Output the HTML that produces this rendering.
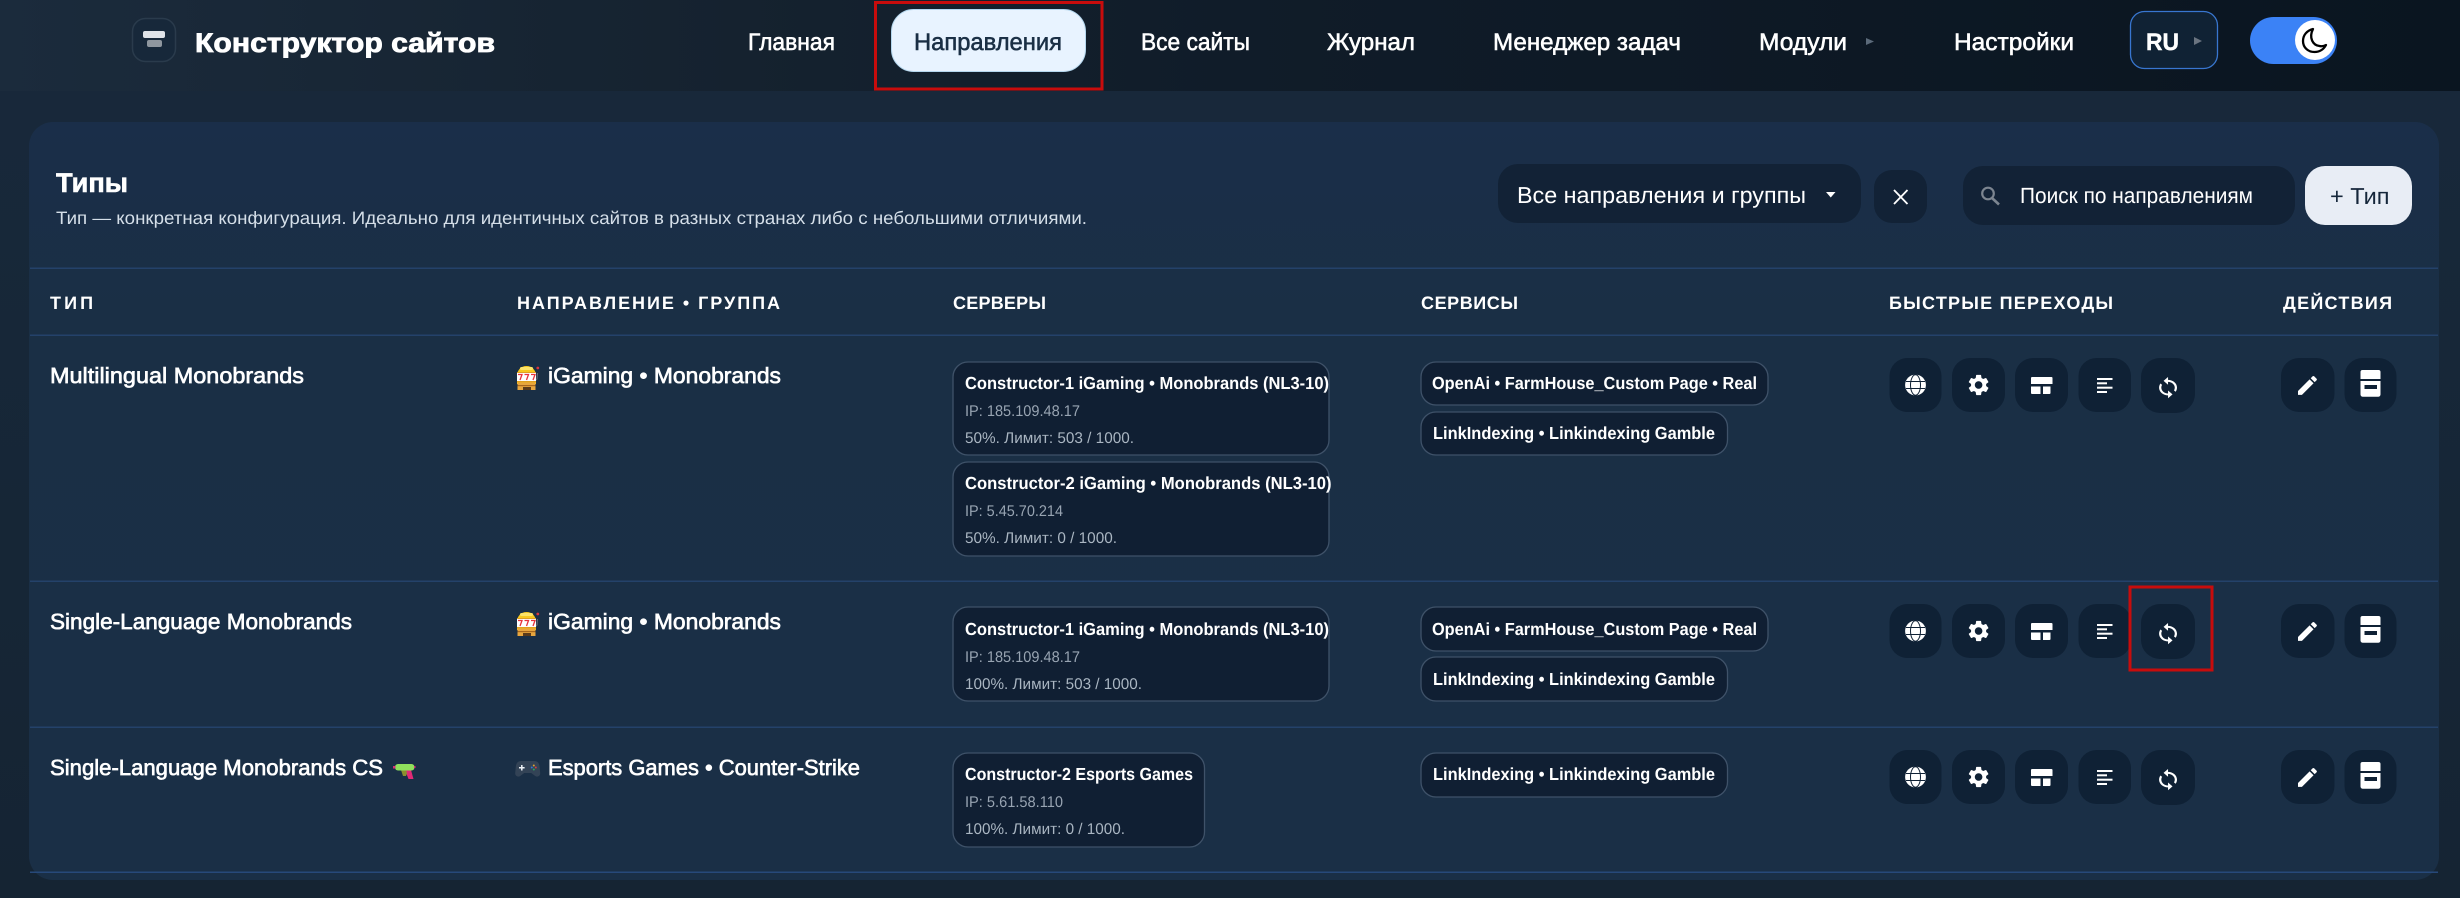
<!DOCTYPE html>
<html lang="ru"><head><meta charset="utf-8"><title>Конструктор сайтов</title>
<style>
html,body{margin:0;padding:0;background:#16273a;width:2460px;height:898px;overflow:hidden}
svg{display:block}
text{font-family:"Liberation Sans",sans-serif;fill:#fff;text-rendering:geometricPrecision}
.nav{font-size:24px;stroke:#fff;stroke-width:.55px}
.th{font-size:18px;font-weight:700}
.nm{font-size:22px;stroke:#fff;stroke-width:.65px}
.st{font-size:17.5px;font-weight:700}
.ip{font-size:15.5px;fill:#98a4b2}
.lm{font-size:15.5px;fill:#aab6c2}
.box{fill:#101f33;stroke:#3f5269;stroke-width:1.3}
.ib{fill:#0f2135}
.ln{fill:#24426a}
</style></head><body>
<svg width="2460" height="898" viewBox="0 0 2460 898" xmlns="http://www.w3.org/2000/svg">
<defs>
<linearGradient id="hd" x1="0" x2="1" y1="0" y2="0"><stop offset="0" stop-color="#1b2b3c"/><stop offset=".3" stop-color="#15222f"/><stop offset=".5" stop-color="#101c29"/><stop offset="1" stop-color="#0a1520"/></linearGradient>
<linearGradient id="bg" x1="0" x2="0" y1="0" y2="1"><stop offset="0" stop-color="#18293b"/><stop offset="1" stop-color="#152433"/></linearGradient>
<linearGradient id="cd" x1="0" x2="0" y1="0" y2="1"><stop offset="0" stop-color="#1a2e49"/><stop offset=".25" stop-color="#1a2f45"/><stop offset="1" stop-color="#1a2f46"/></linearGradient>

<g id="btns">
<rect class="ib" x="1889.5" y="358" width="52" height="54" rx="18"/>
<rect class="ib" x="1952" y="358" width="53" height="54" rx="18"/>
<rect class="ib" x="2015" y="358" width="53" height="54" rx="18"/>
<rect class="ib" x="2078.5" y="358" width="52.5" height="54" rx="18"/>
<rect class="ib" x="2141" y="358" width="54" height="55" rx="19"/>
<rect class="ib" x="2281" y="358" width="53.5" height="54" rx="18"/>
<rect class="ib" x="2344.5" y="358" width="52" height="54" rx="18"/>
<!-- globe -->
<circle cx="1915.5" cy="385" r="10.4" fill="#fff"/>
<g fill="none" stroke="#0f2135" stroke-width="1"><ellipse cx="1915.5" cy="385" rx="5" ry="10.2"/><path d="M1906 381.500h19M1906 388.500h19"/></g>
<!-- gear -->
<path transform="translate(1966 372.4) scale(1.05)" fill="#fff" d="M19.14 12.94c.04-.3.06-.61.06-.94 0-.32-.02-.64-.07-.94l2.03-1.58c.18-.14.23-.41.12-.61l-1.92-3.32c-.12-.22-.37-.29-.59-.22l-2.39.96c-.5-.38-1.03-.7-1.62-.94l-.36-2.54c-.04-.24-.24-.41-.48-.41h-3.84c-.24 0-.43.17-.47.41l-.36 2.54c-.59.24-1.13.57-1.62.94l-2.39-.96c-.22-.08-.47 0-.59.22L2.74 8.87c-.12.21-.08.47.12.61l2.03 1.58c-.05.3-.09.63-.09.94s.02.64.07.94l-2.03 1.58c-.18.14-.23.41-.12.61l1.92 3.32c.12.22.37.29.59.22l2.39-.96c.5.38 1.03.7 1.62.94l.36 2.54c.05.24.24.41.48.41h3.84c.24 0 .44-.17.47-.41l.36-2.54c.59-.24 1.13-.56 1.62-.94l2.39.96c.22.08.47 0 .59-.22l1.92-3.32c.12-.22.07-.47-.12-.61l-2.01-1.58zM12 15.6c-1.98 0-3.6-1.62-3.6-3.6s1.62-3.6 3.6-3.6 3.6 1.62 3.6 3.6-1.62 3.6-3.6 3.6z"/>
<!-- dashboard -->
<path fill="#fff" d="M2032 377h19.5a1 1 0 0 1 1 1v6h-21.5v-6a1 1 0 0 1 1-1zM2031 386.500h9.500V394h-8.500a1 1 0 0 1-1-1zM2043 386.500h7.500V393a1 1 0 0 1-1 1h-6.500z"/>
<!-- list -->
<g fill="#fff"><rect x="2097" y="378" width="15.500" height="2"/><rect x="2097" y="382.300" width="10" height="2"/><rect x="2097" y="386.700" width="15.500" height="2"/><rect x="2097" y="391" width="10" height="2"/></g>
<!-- sync -->
<path transform="translate(2154.6 376) scale(1.12 .97)" fill="#fff" d="M12 4V1L8 5l4 4V6c3.31 0 6 2.69 6 6 0 1.01-.25 1.97-.7 2.8l1.46 1.46C19.54 15.03 20 13.57 20 12c0-4.42-3.58-8-8-8zm0 14c-3.31 0-6-2.69-6-6 0-1.01.25-1.97.7-2.8L5.24 7.74C4.46 8.97 4 10.43 4 12c0 4.42 3.58 8 8 8v3l4-4-4-4v3z"/>
<!-- pencil -->
<path transform="translate(2294.85 372.85) scale(1.05)" fill="#fff" d="M3 17.25V21h3.75L17.81 9.94l-3.75-3.75L3 17.25zM20.71 7.040c.39-.39.39-1.020 0-1.410l-2.340-2.340c-.39-.39-1.020-.39-1.410 0l-1.830 1.830 3.750 3.750 1.830-1.830z"/>
<!-- archive -->
<path fill="#fff" d="M2362.500 370h16a2 2 0 0 1 2 2v7h-20v-7a2 2 0 0 1 2-2zM2360.500 381h20v13.500a2.300 2.300 0 0 1-2.300 2.300h-15.400a2.300 2.300 0 0 1-2.300-2.300z"/>
<rect x="2364.500" y="385" width="12.500" height="4" fill="#0f2135"/>
</g>

<g id="slot">
<path d="M537.500 373l-.5 6-2 2" fill="none" stroke="#5d6670" stroke-width="1.200"/>
<circle cx="537.800" cy="368" r="1.400" fill="#d8353d"/>
<path d="M517 376c0-6 4-10 9.500-10s9.500 4 9.500 10v8h-19z" fill="#f7c81f"/>
<rect x="520" y="367" width="13" height="3" rx="1.500" fill="#fde468"/>
<rect x="517" y="373" width="19" height="8" fill="#fff"/>
<rect x="517" y="372" width="19" height="1" fill="#e0a020"/>
<rect x="517" y="381" width="19" height="1.300" fill="#e0a020"/>
<g fill="none" stroke="#e8343c" stroke-width="1.300"><path d="M518 374.500h4l-2 5.500M524.500 374.500h4l-2 5.500M531 374.500h4l-2 5.500"/></g>
<rect x="517.500" y="382.500" width="18" height="7.500" fill="#e8a63e"/>
<rect x="517.500" y="385" width="18" height="1.200" fill="#a8661c"/>
<rect x="523" y="387" width="8" height="3" fill="#5a3a1a"/>
</g>
</defs>

<rect width="2460" height="898" fill="url(#bg)"/>
<rect width="2460" height="91" fill="url(#hd)"/>
<rect x="29" y="122" width="2410" height="758" rx="24" fill="url(#cd)"/>

<!-- logo -->
<rect x="132.500" y="18.500" width="43" height="43" rx="13" fill="#17283a" stroke="#2a3b4c" stroke-width="1.5"/>
<rect x="143" y="31" width="22" height="7" rx="2" fill="#dfe3e8"/>
<rect x="147" y="40" width="15" height="7" rx="2" fill="#8f979f"/>
<text x="195" y="52" font-size="27" font-weight="700" textLength="300" lengthAdjust="spacingAndGlyphs" stroke="#fff" stroke-width=".8">Конструктор сайтов</text>

<!-- nav -->
<text class="nav" x="748" y="50" textLength="87" lengthAdjust="spacingAndGlyphs">Главная</text>
<rect x="891.500" y="9.500" width="194" height="62" rx="22" fill="#e8f3ff" stroke="#b5d7ee"/>
<text class="nav" x="914" y="50" textLength="148" lengthAdjust="spacingAndGlyphs" style="fill:#1a2f45;stroke:#1a2f45">Направления</text>
<rect x="875.500" y="2.500" width="226.500" height="86.500" fill="none" stroke="#c80c0c" stroke-width="3"/>
<text class="nav" x="1141" y="50" textLength="109" lengthAdjust="spacingAndGlyphs">Все сайты</text>
<text class="nav" x="1327" y="50" textLength="88" lengthAdjust="spacingAndGlyphs">Журнал</text>
<text class="nav" x="1493" y="50" textLength="188" lengthAdjust="spacingAndGlyphs">Менеджер задач</text>
<text class="nav" x="1759" y="50" textLength="88" lengthAdjust="spacingAndGlyphs">Модули</text>
<path d="M1866 38l8 3.500-8 3.500z" fill="#5b6a7a"/>
<text class="nav" x="1954" y="50" textLength="120" lengthAdjust="spacingAndGlyphs">Настройки</text>
<rect x="2130.500" y="11.500" width="87" height="57" rx="14" fill="#102234" stroke="#3876cf" stroke-width="1.300"/>
<text x="2146" y="50" font-size="24" font-weight="700" textLength="33" lengthAdjust="spacingAndGlyphs" stroke="#fff" stroke-width=".4">RU</text>
<path d="M2194 37l8 4-8 4z" fill="#6a7480"/>
<rect x="2250" y="17" width="87" height="47" rx="23.500" fill="#3b82f6"/>
<circle cx="2315" cy="40" r="20" fill="#fff"/>
<path d="M2313 29c-6 1.500-10 6-10 12 0 6.500 5 11 11.500 11 5 0 9-2.500 11.500-7-2 1-4.500 1.500-6.500 1-6.500-.7-11-8-6.500-17z" fill="none" stroke="#000" stroke-width="2.300" stroke-linejoin="round"/>

<!-- section head -->
<text x="56" y="192" font-size="27" font-weight="700" textLength="72" lengthAdjust="spacingAndGlyphs" stroke="#fff" stroke-width=".6">Типы</text>
<text x="56" y="224" font-size="18" textLength="1031" lengthAdjust="spacingAndGlyphs" style="fill:#d5dfe9">Тип — конкретная конфигурация. Идеально для идентичных сайтов в разных странах либо с небольшими отличиями.</text>

<rect x="1498" y="164" width="363" height="59" rx="20" fill="#122236"/>
<text x="1517" y="203" font-size="23" textLength="289" lengthAdjust="spacingAndGlyphs">Все направления и группы</text>
<path d="M1826 192h9.500l-4.750 5.500z" fill="#fff"/>
<rect x="1874" y="170" width="53" height="53" rx="18" fill="#122236"/>
<path d="M1894 190l13.500 14M1907.500 190l-13.500 14" stroke="#fff" stroke-width="1.800" fill="none"/>
<rect x="1963" y="166" width="332" height="59" rx="20" fill="#122236"/>
<circle cx="1988" cy="193.500" r="5.800" fill="none" stroke="#7c8590" stroke-width="2.200"/>
<path d="M1992 198l7 6.500" stroke="#7c8590" stroke-width="2.600" fill="none"/>
<text x="2020" y="203" font-size="22" textLength="233" lengthAdjust="spacingAndGlyphs">Поиск по направлениям</text>
<rect x="2305" y="166" width="107" height="59" rx="20" fill="#e8edf5"/>
<text x="2330" y="204" font-size="23" textLength="59.500" lengthAdjust="spacingAndGlyphs" style="fill:#15263a">+ Тип</text>

<!-- table lines -->
<rect class="ln" x="30" y="267.500" width="2408" height="1.500"/>
<rect class="ln" x="30" y="334.500" width="2408" height="1.500"/>
<rect class="ln" x="30" y="580.500" width="2408" height="1.500"/>
<rect class="ln" x="30" y="726.500" width="2408" height="1.500"/>
<rect x="30" y="871.500" width="2408" height="1.500" fill="#27497a"/>

<!-- table head -->
<text class="th" x="50" y="309" textLength="43">ТИП</text>
<text class="th" x="517" y="309" textLength="263">НАПРАВЛЕНИЕ • ГРУППА</text>
<text class="th" x="953" y="309" textLength="93">СЕРВЕРЫ</text>
<text class="th" x="1421" y="309" textLength="97">СЕРВИСЫ</text>
<text class="th" x="1889" y="309" textLength="224">БЫСТРЫЕ ПЕРЕХОДЫ</text>
<text class="th" x="2283" y="309" textLength="109">ДЕЙСТВИЯ</text>

<!-- row 1 -->
<text class="nm" x="50" y="383" textLength="254" lengthAdjust="spacingAndGlyphs">Multilingual Monobrands</text>
<use href="#slot"/>
<text class="nm" x="548" y="383" textLength="233" lengthAdjust="spacingAndGlyphs">iGaming • Monobrands</text>
<rect class="box" x="953" y="362" width="376" height="93" rx="15"/>
<text class="st" x="965" y="389" textLength="364" lengthAdjust="spacingAndGlyphs">Constructor-1 iGaming • Monobrands (NL3-10)</text>
<text class="ip" x="965" y="416" textLength="115" lengthAdjust="spacingAndGlyphs">IP: 185.109.48.17</text>
<text class="lm" x="965" y="443" textLength="169" lengthAdjust="spacingAndGlyphs">50%. Лимит: 503 / 1000.</text>
<rect class="box" x="953" y="462" width="376" height="94" rx="15"/>
<text class="st" x="965" y="489" textLength="366.500" lengthAdjust="spacingAndGlyphs">Constructor-2 iGaming • Monobrands (NL3-10)</text>
<text class="ip" x="965" y="516" textLength="98" lengthAdjust="spacingAndGlyphs">IP: 5.45.70.214</text>
<text class="lm" x="965" y="543" textLength="152" lengthAdjust="spacingAndGlyphs">50%. Лимит: 0 / 1000.</text>
<rect class="box" x="1421" y="362" width="347" height="43" rx="15"/>
<text class="st" x="1432" y="389" textLength="325" lengthAdjust="spacingAndGlyphs">OpenAi • FarmHouse_Custom Page • Real</text>
<rect class="box" x="1421" y="412" width="306.500" height="43" rx="15"/>
<text class="st" x="1433" y="439" textLength="282" lengthAdjust="spacingAndGlyphs">LinkIndexing • Linkindexing Gamble</text>
<use href="#btns"/>

<!-- row 2 -->
<text class="nm" x="50" y="629" textLength="302" lengthAdjust="spacingAndGlyphs">Single-Language Monobrands</text>
<use href="#slot" y="246"/>
<text class="nm" x="548" y="629" textLength="233" lengthAdjust="spacingAndGlyphs">iGaming • Monobrands</text>
<rect class="box" x="953" y="607" width="376" height="94" rx="15"/>
<text class="st" x="965" y="635" textLength="364" lengthAdjust="spacingAndGlyphs">Constructor-1 iGaming • Monobrands (NL3-10)</text>
<text class="ip" x="965" y="662" textLength="115" lengthAdjust="spacingAndGlyphs">IP: 185.109.48.17</text>
<text class="lm" x="965" y="689" textLength="177" lengthAdjust="spacingAndGlyphs">100%. Лимит: 503 / 1000.</text>
<rect class="box" x="1421" y="607" width="347" height="44" rx="15"/>
<text class="st" x="1432" y="635" textLength="325" lengthAdjust="spacingAndGlyphs">OpenAi • FarmHouse_Custom Page • Real</text>
<rect class="box" x="1421" y="657" width="306.500" height="44" rx="15"/>
<text class="st" x="1433" y="685" textLength="282" lengthAdjust="spacingAndGlyphs">LinkIndexing • Linkindexing Gamble</text>
<use href="#btns" y="246"/>
<rect x="2130" y="587" width="82" height="83" fill="none" stroke="#c80c0c" stroke-width="3"/>

<!-- row 3 -->
<text class="nm" x="50" y="775" textLength="333" lengthAdjust="spacingAndGlyphs">Single-Language Monobrands CS</text>
<!-- water gun -->
<path d="M405 770h6l2.500 9h-5z" fill="#e02a76"/>
<path d="M401 770h5l1 3-1 3h-3z" fill="#8b8f2e"/>
<rect x="395" y="764" width="19.500" height="6.500" rx="3" fill="#8fe05c"/>
<rect x="393" y="766" width="2.500" height="2.500" fill="#d8307a"/>
<rect x="414" y="766" width="1.500" height="2" fill="#d8307a"/>
<!-- gamepad -->
<path d="M522 761h12c3.500 0 5 2 5.500 5l.7 7c.2 3-2.500 4.500-5 3l-4-3h-7l-4 3c-2.500 1.500-5.200 0-5-3l.7-7c.5-3 2-5 5.500-5z" fill="#334356"/>
<path d="M521.800 765v5.500M519 767.800h5.600" stroke="#eef2f6" stroke-width="1.500"/>
<circle cx="533.800" cy="765.500" r="1" fill="#e0a030"/><circle cx="533.800" cy="769.500" r="1" fill="#30a060"/><circle cx="531.800" cy="767.500" r="1" fill="#3078d0"/><circle cx="535.800" cy="767.500" r="1" fill="#d04040"/>
<text class="nm" x="548" y="775" textLength="312" lengthAdjust="spacingAndGlyphs">Esports Games • Counter-Strike</text>
<rect class="box" x="953" y="753" width="251.500" height="94" rx="15"/>
<text class="st" x="965" y="780" textLength="228" lengthAdjust="spacingAndGlyphs">Constructor-2 Esports Games</text>
<text class="ip" x="965" y="807" textLength="98" lengthAdjust="spacingAndGlyphs">IP: 5.61.58.110</text>
<text class="lm" x="965" y="834" textLength="160" lengthAdjust="spacingAndGlyphs">100%. Лимит: 0 / 1000.</text>
<rect class="box" x="1421" y="753" width="306.500" height="44" rx="15"/>
<text class="st" x="1433" y="780" textLength="282" lengthAdjust="spacingAndGlyphs">LinkIndexing • Linkindexing Gamble</text>
<use href="#btns" y="392"/>
</svg>
</body></html>
